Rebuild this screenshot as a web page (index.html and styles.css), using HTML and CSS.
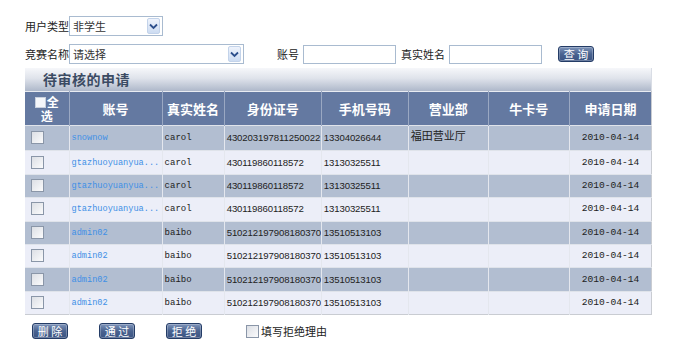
FILE: index.html
```html
<!DOCTYPE html>
<html lang="zh-CN">
  <head>
    <meta charset="UTF-8" />
    <title>待审核的申请</title>
    <link rel="stylesheet" href="styles.css">
  </head>
  <body>
    <div class="page">
      <div class="filterRow">
        <span class="label">用户类型</span>
        <div class="select shortSelect">
          <span class="selectText">非学生</span>
          <span class="arrow"><svg width="9" height="7" viewBox="0 0 9 7"><path d="M1 1.5 L4.5 5 L8 1.5" fill="none" stroke="#2c4f8c" stroke-width="1.8"/></svg></span>
        </div>
      </div>
      <div class="filterRow">
        <span class="label">竞赛名称</span>
        <div class="select longSelect">
          <span class="selectText">请选择</span>
          <span class="arrow"><svg width="9" height="7" viewBox="0 0 9 7"><path d="M1 1.5 L4.5 5 L8 1.5" fill="none" stroke="#2c4f8c" stroke-width="1.8"/></svg></span>
        </div>
        <span class="label accountLabel">账号</span>
        <input type="text" class="textInput" />
        <span class="label nameLabel">真实姓名</span>
        <input type="text" class="textInput" />
        <button class="btn searchBtn">查 询</button>
      </div>

      <div class="panel">
        <div class="panelTitle">待审核的申请</div>
        <table class="list">
          <colgroup>
            <col style="width:44px">
            <col style="width:93px">
            <col style="width:62px">
            <col style="width:97px">
            <col style="width:87px">
            <col style="width:80px">
            <col style="width:81px">
            <col style="width:82px">
          </colgroup>
          <thead>
            <tr>
              <th class="checkHead"><span class="headBox"></span>全<br>选</th>
              <th>账号</th>
              <th>真实姓名</th>
              <th>身份证号</th>
              <th>手机号码</th>
              <th>营业部</th>
              <th>牛卡号</th>
              <th>申请日期</th>
            </tr>
          </thead>
          <tbody>
            <tr class="dark">
              <td><span class="box"></span></td>
              <td class="account"><a href="#">snownow</a></td>
              <td class="mono">carol</td>
              <td class="num">430203197811250022</td>
              <td class="num">13304026644</td>
              <td class="dept">福田营业厅</td>
              <td></td>
              <td class="date">2010-04-14</td>
            </tr>
            <tr class="light">
              <td><span class="box"></span></td>
              <td class="account"><a href="#">gtazhuoyuanyua...</a></td>
              <td class="mono">carol</td>
              <td class="num">430119860118572</td>
              <td class="num">13130325511</td>
              <td></td>
              <td></td>
              <td class="date">2010-04-14</td>
            </tr>
            <tr class="dark">
              <td><span class="box"></span></td>
              <td class="account"><a href="#">gtazhuoyuanyua...</a></td>
              <td class="mono">carol</td>
              <td class="num">430119860118572</td>
              <td class="num">13130325511</td>
              <td></td>
              <td></td>
              <td class="date">2010-04-14</td>
            </tr>
            <tr class="light">
              <td><span class="box"></span></td>
              <td class="account"><a href="#">gtazhuoyuanyua...</a></td>
              <td class="mono">carol</td>
              <td class="num">430119860118572</td>
              <td class="num">13130325511</td>
              <td></td>
              <td></td>
              <td class="date">2010-04-14</td>
            </tr>
            <tr class="dark">
              <td><span class="box"></span></td>
              <td class="account"><a href="#">admin02</a></td>
              <td class="mono">baibo</td>
              <td class="num">510212197908180370</td>
              <td class="num">13510513103</td>
              <td></td>
              <td></td>
              <td class="date">2010-04-14</td>
            </tr>
            <tr class="light">
              <td><span class="box"></span></td>
              <td class="account"><a href="#">admin02</a></td>
              <td class="mono">baibo</td>
              <td class="num">510212197908180370</td>
              <td class="num">13510513103</td>
              <td></td>
              <td></td>
              <td class="date">2010-04-14</td>
            </tr>
            <tr class="dark">
              <td><span class="box"></span></td>
              <td class="account"><a href="#">admin02</a></td>
              <td class="mono">baibo</td>
              <td class="num">510212197908180370</td>
              <td class="num">13510513103</td>
              <td></td>
              <td></td>
              <td class="date">2010-04-14</td>
            </tr>
            <tr class="light">
              <td><span class="box"></span></td>
              <td class="account"><a href="#">admin02</a></td>
              <td class="mono">baibo</td>
              <td class="num">510212197908180370</td>
              <td class="num">13510513103</td>
              <td></td>
              <td></td>
              <td class="date">2010-04-14</td>
            </tr>
          </tbody>
        </table>
      </div>

      <div class="actions">
        <button class="btn">删 除</button>
        <button class="btn">通 过</button>
        <button class="btn">拒 绝</button>
        <label class="reason"><span class="box"></span>填写拒绝理由</label>
      </div>
    </div>
  </body>
</html>
```

FILE: styles.css
```css
body {
  margin: 0;
  background-color: #fff;
  font-family: "Noto Sans CJK SC", "Liberation Sans", sans-serif;
  font-size: 11px;
  color: #222;
}

.page {
  padding: 16px 0 0 25px;
}

.filterRow {
  display: flex;
  align-items: center;
  height: 20px;
}

.filterRow + .filterRow {
  margin-top: 8px;
}

.label {
  white-space: nowrap;
  line-height: 20px;
}

.select {
  display: flex;
  align-items: center;
  justify-content: space-between;
  height: 20px;
  box-sizing: border-box;
  border: 1px solid #a9bbd0;
  padding: 0 2px 0 3px;
  background-color: #fff;
}

.shortSelect {
  width: 94px;
}

.longSelect {
  width: 175px;
}

.selectText {
  line-height: 18px;
  color: #333;
}

.arrow {
  display: flex;
  align-items: center;
  justify-content: center;
  width: 11px;
  height: 14px;
  border: 1px solid #c3d3ea;
  border-radius: 2px;
  background: linear-gradient(#eef3fc, #cddcf2);
}

.accountLabel {
  margin-left: 33px;
  margin-right: 4px;
}

.nameLabel {
  margin-left: 5px;
  margin-right: 4px;
}

.textInput {
  width: 93px;
  height: 19px;
  box-sizing: border-box;
  border: 1px solid #a9bbd0;
  padding: 0 2px;
  margin: 0;
}

.btn {
  width: 36px;
  height: 16px;
  padding: 0;
  box-sizing: border-box;
  border: 1px solid #243c66;
  border-radius: 3px;
  background: linear-gradient(#7f95ba, #4a6390 50%, #3b5482);
  box-shadow: inset 0 0 0 1px rgba(255, 255, 255, 0.25);
  color: #fff;
  font-family: "Noto Sans CJK SC", sans-serif;
  font-size: 11px;
  line-height: 13px;
  cursor: pointer;
}

.searchBtn {
  margin-left: 16px;
}

.panel {
  width: 627px;
  margin-top: 4px;
}

.panelTitle {
  height: 23px;
  line-height: 23px;
  padding-left: 18px;
  background: linear-gradient(#f6f7fa, #dfe3eb 45%, #aeb8ca);
  border-right: 1px solid #d9dde5;
  color: #3b4b63;
  font-size: 14px;
  font-weight: bold;
  letter-spacing: 0.5px;
}

.list {
  width: 627px;
  table-layout: fixed;
  border-collapse: collapse;
  border-top: 1px solid #e8ebf1;
  border-right: 1px solid #c9ccd2;
  border-bottom: 1px solid #c9ccd2;
}

.list th {
  height: 33px;
  padding: 0;
  background-color: #6479a1;
  border-left: 1px solid #9aa8c2;
  color: #fff;
  font-size: 13px;
  font-weight: bold;
  line-height: 15px;
  text-align: center;
}

.list th:first-child {
  border-left: none;
}

.list .checkHead {
  font-size: 12px;
  line-height: 14px;
}

.headBox {
  display: inline-block;
  width: 9px;
  height: 9px;
  margin-right: 1px;
  background-color: #f4f6fa;
  border: 1px solid #c8d0de;
  vertical-align: -1px;
}

.list td {
  height: 22.4px;
  padding: 0 2px;
  border-left: 1px solid #e4e7ee;
  border-top: 1px solid #dfe3ea;
  white-space: nowrap;
  overflow: hidden;
  line-height: 14px;
  vertical-align: middle;
  font-family: "Liberation Mono", monospace;
  font-size: 9px;
  color: #222;
}

.list td:first-child {
  border-left: none;
  padding-left: 6px;
}

.dark td {
  background-color: #b2bed1;
}

.light td {
  background-color: #eceef8;
}

.box {
  display: inline-block;
  width: 11px;
  height: 11px;
  border: 1px solid #8a96a8;
  background: linear-gradient(135deg, #dcdfe5, #fbfbfc);
  vertical-align: middle;
}

.list .account {
  font-size: 8.6px;
}

.account a {
  color: #3f90e6;
  text-decoration: none;
}

.list .num {
  font-family: "Liberation Sans", sans-serif;
  font-size: 9.6px;
  letter-spacing: -0.1px;
}

.list .dept {
  vertical-align: top;
  padding-top: 2px;
  font-family: "Noto Sans CJK SC", sans-serif;
  font-size: 11px;
}

.list .date {
  font-size: 9.6px;
  text-align: center;
}

.actions {
  display: flex;
  align-items: center;
  margin-top: 8px;
  padding-left: 7px;
}

.actions .btn + .btn {
  margin-left: 31px;
}

.reason {
  display: flex;
  align-items: center;
  margin-left: 44px;
  font-size: 11px;
}

.reason .box {
  margin-right: 2px;
}
```
